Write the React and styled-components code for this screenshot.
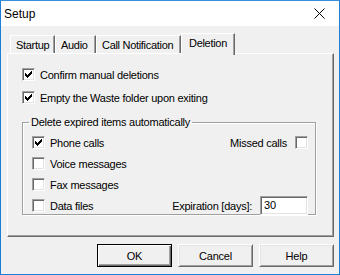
import React from 'react'
import styled, { createGlobalStyle } from 'styled-components'

const Global = createGlobalStyle`
  html, body {
    margin: 0;
    padding: 0;
    background: #ffffff;
  }
  body {
    font-family: "Liberation Sans", Arial, sans-serif;
    font-size: 11px;
    color: #000;
  }
`

const Window = styled.div`
  width: 340px;
  height: 275px;
  box-sizing: border-box;
  border: 1px solid #1c7ed6;
  border-top-color: #3a8fdc;
  background: #f0f0f0;
  display: flex;
  flex-direction: column;
`

const TitleBar = styled.div`
  height: 25px;
  background: #fff;
  display: flex;
  align-items: center;
  justify-content: space-between;
`

const Title = styled.div`
  padding-left: 3px;
  padding-top: 1px;
  font-size: 12px;
`

const Close = styled.div`
  width: 30px;
  height: 25px;
  display: flex;
  align-items: center;
  justify-content: center;
  margin-right: 5px;
`

const Body = styled.div`
  flex: 1;
  padding: 7px 5px 0 6px;
  display: flex;
  flex-direction: column;
`

const TabStrip = styled.div`
  display: flex;
  align-items: flex-end;
  height: 20px;
  padding-left: 3px;
  position: relative;
  z-index: 1;
`

const Tab = styled.div`
  box-sizing: border-box;
  width: ${p => p.$w}px;
  height: ${p => (p.$active ? 22 : 18)}px;
  margin-bottom: ${p => (p.$active ? -2 : 0)}px;
  padding-left: ${p => (p.$active ? 7 : 5)}px;
  padding-top: 3px;
  background: #f0f0f0;
  border-top: 1px solid #fff;
  border-left: 1px solid #fff;
  border-right: 1px solid #696969;
  box-shadow: inset -1px 0 0 #a0a0a0;
  letter-spacing: -0.3px;
  white-space: nowrap;
`

const Panel = styled.div`
  box-sizing: border-box;
  width: 327px;
  height: 184px;
  border-top: 1px solid #fff;
  border-left: 1px solid #fff;
  border-right: 1px solid #696969;
  border-bottom: 1px solid #696969;
  box-shadow: inset -1px -1px 0 #a0a0a0;
  padding: 14px 0 0 14px;
  display: flex;
  flex-direction: column;
  gap: 10px;
`

const Row = styled.label`
  display: flex;
  align-items: center;
  gap: 5px;
  height: 13px;
  letter-spacing: -0.25px;
  white-space: nowrap;
`

const Box = styled.span`
  box-sizing: border-box;
  width: 13px;
  height: 13px;
  flex: none;
  background: #fff;
  border-top: 1px solid #a0a0a0;
  border-left: 1px solid #a0a0a0;
  border-right: 1px solid #fff;
  border-bottom: 1px solid #fff;
  box-shadow: inset 1px 1px 0 #696969, inset -1px -1px 0 #e3e3e3;
  display: flex;
  align-items: center;
  justify-content: center;
`

const Group = styled.fieldset`
  box-sizing: border-box;
  width: 294px;
  height: 99px;
  margin: 2px 0 0 0;
  padding: 7px 7px 0 9px;
  border: 1px solid #a0a0a0;
  box-shadow: 1px 1px 0 #fff, inset 1px 1px 0 #fff;
`

const Legend = styled.legend`
  padding: 0 2px;
  margin-left: -3px;
  line-height: 13px;
  letter-spacing: -0.25px;
`

const Grid = styled.div`
  display: grid;
  grid-template-columns: 1fr auto;
  grid-template-rows: repeat(4, 13px);
  row-gap: 8px;
  align-items: center;
`

const Right = styled.div`
  display: flex;
  align-items: center;
  justify-content: flex-end;
  gap: 8px;
  letter-spacing: -0.25px;
`

const Field = styled.div`
  box-sizing: border-box;
  width: 48px;
  height: 19px;
  background: #fff;
  border-top: 1px solid #a0a0a0;
  border-left: 1px solid #a0a0a0;
  border-right: 1px solid #fff;
  border-bottom: 1px solid #fff;
  box-shadow: inset 1px 1px 0 #696969, inset -1px -1px 0 #e3e3e3;
  padding: 2px 0 0 3px;
  letter-spacing: -0.2px;
`

const Buttons = styled.div`
  display: flex;
  justify-content: flex-end;
  gap: 6px;
  padding: 7px 0 0 0;
`

const Button = styled.div`
  box-sizing: border-box;
  width: 75px;
  height: 23px;
  display: flex;
  align-items: center;
  justify-content: center;
  background: #f0f0f0;
  border: 1px solid;
  border-color: ${p => (p.$default ? '#000' : '#fff #696969 #696969 #fff')};
  box-shadow: ${p =>
    p.$default
      ? 'inset 1px 1px 0 #fff, inset -1px -1px 0 #696969, inset -2px -2px 0 #a0a0a0'
      : 'inset 1px 1px 0 #e3e3e3, inset -1px -1px 0 #a0a0a0'};
  letter-spacing: -0.2px;
`

const Tick = () => (
  <svg width="7" height="7" viewBox="0 0 7 7" shapeRendering="crispEdges">
    <path
      d="M6 0h1v1h-1zM5 1h2v1h-2zM0 2h1v1h-1zM4 2h3v1h-3zM0 3h2v1h-2zM3 3h3v1h-3zM0 4h5v1h-5zM1 5h3v1h-3zM2 6h1v1h-1z"
      fill="#000"
    />
  </svg>
)

const Check = ({ checked, children }) => (
  <Row>
    <Box>{checked && <Tick />}</Box>
    {children}
  </Row>
)

const tabs = [
  { label: 'Startup', w: 45 },
  { label: 'Audio', w: 41 },
  { label: 'Call Notification', w: 85 },
  { label: 'Deletion', w: 54, active: true }
]

export default function App () {
  return (
    <>
      <Global />
      <Window>
        <TitleBar>
          <Title>Setup</Title>
          <Close>
            <svg width="11" height="11" viewBox="0 0 11 11">
              <path d="M0.5 0.5L10.5 10.5M10.5 0.5L0.5 10.5" stroke="#000" strokeWidth="1" />
            </svg>
          </Close>
        </TitleBar>
        <Body>
          <TabStrip>
            {tabs.map(t => (
              <Tab key={t.label} $w={t.w} $active={t.active}>
                {t.label}
              </Tab>
            ))}
          </TabStrip>
          <Panel>
            <Check checked>Confirm manual deletions</Check>
            <Check checked>Empty the Waste folder upon exiting</Check>
            <Group>
              <Legend>Delete expired items automatically</Legend>
              <Grid>
                <Check checked>Phone calls</Check>
                <Right>
                  Missed calls
                  <Box />
                </Right>
                <Check>Voice messages</Check>
                <span />
                <Check>Fax messages</Check>
                <span />
                <Check>Data files</Check>
                <Right>
                  Expiration [days]:
                  <Field>30</Field>
                </Right>
              </Grid>
            </Group>
          </Panel>
          <Buttons>
            <Button $default>OK</Button>
            <Button>Cancel</Button>
            <Button>Help</Button>
          </Buttons>
        </Body>
      </Window>
    </>
  )
}
